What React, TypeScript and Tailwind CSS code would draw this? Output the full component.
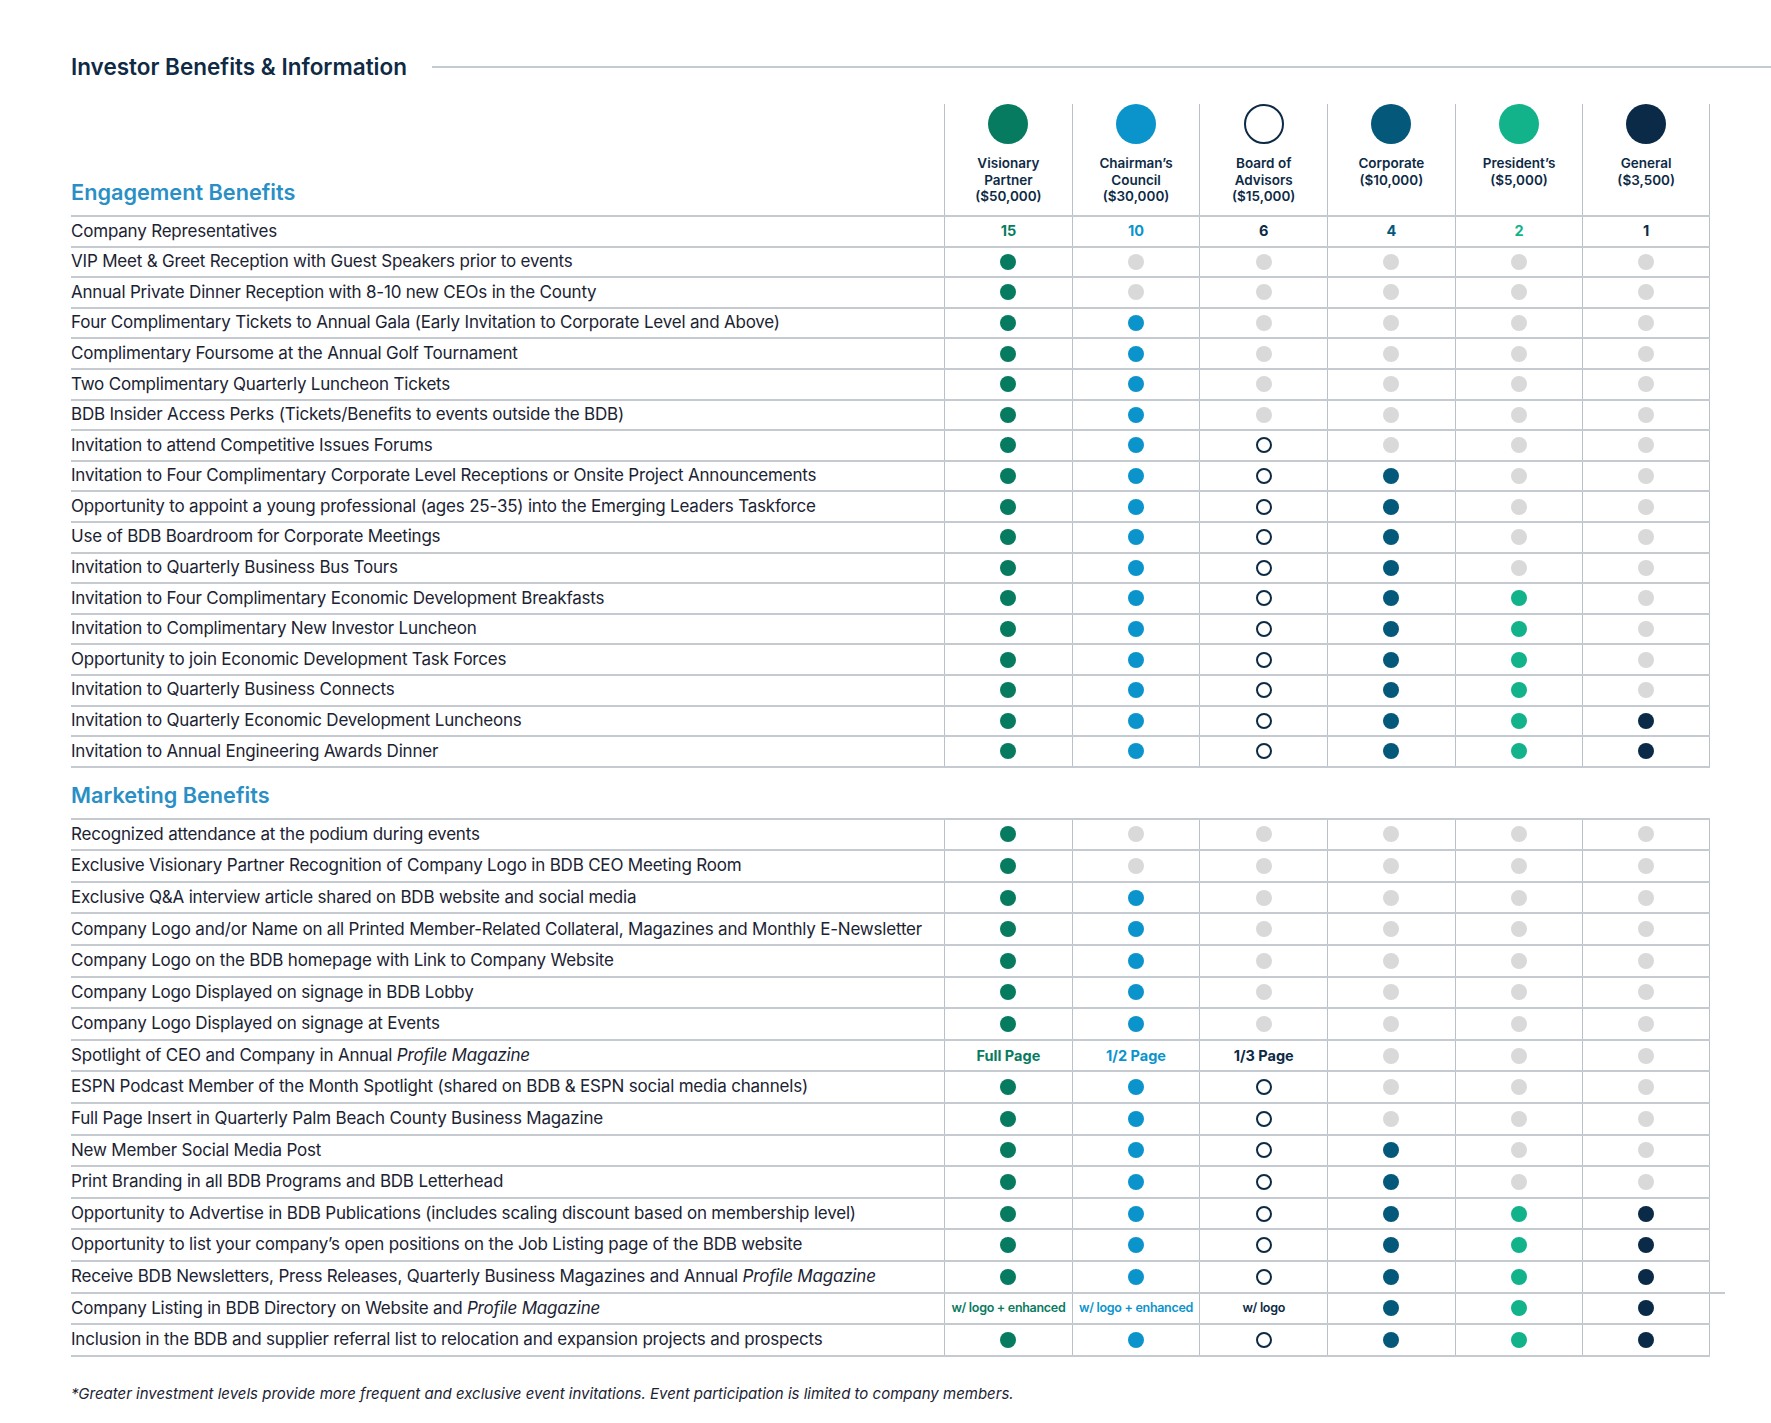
import React from "react";

type Cell = number | string;

const tiers = [
  { name: ["Visionary", "Partner", "($50,000)"], fill: "bg-[#077b60]", text: "text-[#077b60]" },
  { name: ["Chairman’s", "Council", "($30,000)"], fill: "bg-[#0b94cc]", text: "text-[#0b94cc]" },
  { name: ["Board of", "Advisors", "($15,000)"], fill: "open", text: "text-[#0d2a45]" },
  { name: ["Corporate", "($10,000)"], fill: "bg-[#04597b]", text: "text-[#04597b]" },
  { name: ["President’s", "($5,000)"], fill: "bg-[#12b38b]", text: "text-[#12b38b]" },
  { name: ["General", "($3,500)"], fill: "bg-[#0a2a47]", text: "text-[#0a2a47]" },
];

// level n = first n tiers get the benefit
const lv = (n: number): Cell[] => [0, 1, 2, 3, 4, 5].map((i) => (i < n ? 1 : 0));

type Row = { label: React.ReactNode; cells: Cell[]; extend?: boolean };

const engagement: Row[] = [
  { label: "Company Representatives", cells: ["15", "10", "6", "4", "2", "1"] },
  { label: "VIP Meet & Greet Reception with Guest Speakers prior to events", cells: lv(1) },
  { label: "Annual Private Dinner Reception with 8-10 new CEOs in the County", cells: lv(1) },
  { label: "Four Complimentary Tickets to Annual Gala (Early Invitation to Corporate Level and Above)", cells: lv(2) },
  { label: "Complimentary Foursome at the Annual Golf Tournament", cells: lv(2) },
  { label: "Two Complimentary Quarterly Luncheon Tickets", cells: lv(2) },
  { label: "BDB Insider Access Perks (Tickets/Benefits to events outside the BDB)", cells: lv(2) },
  { label: "Invitation to attend Competitive Issues Forums", cells: lv(3) },
  { label: "Invitation to Four Complimentary Corporate Level Receptions or Onsite Project Announcements", cells: lv(4) },
  { label: "Opportunity to appoint a young professional (ages 25-35) into the Emerging Leaders Taskforce", cells: lv(4) },
  { label: "Use of BDB Boardroom for Corporate Meetings", cells: lv(4) },
  { label: "Invitation to Quarterly Business Bus Tours", cells: lv(4) },
  { label: "Invitation to Four Complimentary Economic Development Breakfasts", cells: lv(5) },
  { label: "Invitation to Complimentary New Investor Luncheon", cells: lv(5) },
  { label: "Opportunity to join Economic Development Task Forces", cells: lv(5) },
  { label: "Invitation to Quarterly Business Connects", cells: lv(5) },
  { label: "Invitation to Quarterly Economic Development Luncheons", cells: lv(6) },
  { label: "Invitation to Annual Engineering Awards Dinner", cells: lv(6) },
];

const marketing: Row[] = [
  { label: "Recognized attendance at the podium during events", cells: lv(1) },
  { label: "Exclusive Visionary Partner Recognition of Company Logo in BDB CEO Meeting Room", cells: lv(1) },
  { label: "Exclusive Q&A interview article shared on BDB website and social media", cells: lv(2) },
  { label: "Company Logo and/or Name on all Printed Member-Related Collateral, Magazines and Monthly E-Newsletter", cells: lv(2) },
  { label: "Company Logo on the BDB homepage with Link to Company Website", cells: lv(2) },
  { label: "Company Logo Displayed on signage in BDB Lobby", cells: lv(2) },
  { label: "Company Logo Displayed on signage at Events", cells: lv(2) },
  {
    label: (
      <>
        Spotlight of CEO and Company in Annual <i>Profile Magazine</i>
      </>
    ),
    cells: ["Full Page", "1/2 Page", "1/3 Page", 0, 0, 0],
  },
  { label: "ESPN Podcast Member of the Month Spotlight (shared on BDB & ESPN social media channels)", cells: lv(3) },
  { label: "Full Page Insert in Quarterly Palm Beach County Business Magazine", cells: lv(3) },
  { label: "New Member Social Media Post", cells: lv(4) },
  { label: "Print Branding in all BDB Programs and BDB Letterhead", cells: lv(4) },
  { label: "Opportunity to Advertise in BDB Publications (includes scaling discount based on membership level)", cells: lv(6) },
  { label: "Opportunity to list your company’s open positions on the Job Listing page of the BDB website", cells: lv(6) },
  {
    label: (
      <>
        Receive BDB Newsletters, Press Releases, Quarterly Business Magazines and Annual <i>Profile Magazine</i>
      </>
    ),
    cells: lv(6),
    extend: true,
  },
  {
    label: (
      <>
        Company Listing in BDB Directory on Website and <i>Profile Magazine</i>
      </>
    ),
    cells: ["w/ logo + enhanced", "w/ logo + enhanced", "w/ logo", 1, 1, 1],
  },
  { label: "Inclusion in the BDB and supplier referral list to relocation and expansion projects and prospects", cells: lv(6) },
];

function Dot({ tier, on }: { tier: number; on: boolean }) {
  if (!on) return <span className="block h-4 w-4 rounded-full bg-[#d9d9d9]" />;
  const fill = tiers[tier].fill;
  if (fill === "open") return <span className="block h-4 w-4 rounded-full border-2 border-[#0d2a45] bg-white" />;
  return <span className={`block h-4 w-4 rounded-full ${fill}`} />;
}

function ValueCell({ value, tier }: { value: Cell; tier: number }) {
  let inner: React.ReactNode;
  if (typeof value === "number") {
    inner = <Dot tier={tier} on={value === 1} />;
  } else if (value.startsWith("w/")) {
    inner = <span className={`text-[12.5px] font-semibold tracking-[-0.3px] ${tiers[tier].text}`}>{value}</span>;
  } else {
    inner = <span className={`text-[14.5px] font-bold ${tiers[tier].text}`}>{value}</span>;
  }
  return (
    <div className={`flex items-center justify-center border-l border-[#b9c0c7] ${tier === 5 ? "border-r" : ""}`}>
      {inner}
    </div>
  );
}

function BenefitRows({ rows, rowH }: { rows: Row[]; rowH: string }) {
  return (
    <>
      {rows.map((row, i) => (
        <div
          key={i}
          className={`relative grid grid-cols-[1fr_repeat(6,127.67px)] border-b-2 border-[#c5cad0] ${rowH}`}
        >
          <div className="flex items-center text-[17px] tracking-[-0.2px] text-[#1b2333]">
            <span>{row.label}</span>
          </div>
          {row.cells.map((c, t) => (
            <ValueCell key={t} value={c} tier={t} />
          ))}
          {row.extend ? <span className="absolute -bottom-[2px] -right-[15px] h-[2px] w-[15px] bg-[#c5cad0]" /> : null}
        </div>
      ))}
    </>
  );
}

export default function App() {
  return (
    <div className="min-h-[1423px] w-[1771px] bg-white font-['Inter','Liberation_Sans',sans-serif]">
      <div className="flex items-center pl-[71px] pt-[53px]">
        <h1 className="text-[22.5px] font-semibold leading-[28px] text-[#0f2a44]">
          Investor Benefits &amp; Information
        </h1>
        <div className="ml-[25px] h-[2px] flex-1 bg-[#c3cad1]" />
      </div>

      <div className="ml-[71px] mt-[23px] w-[1639px]">
        {/* header */}
        <div className="grid h-[113px] grid-cols-[1fr_repeat(6,127.67px)] border-b-2 border-[#c5cad0]">
          <div className="flex items-end pb-[9px]">
            <h2 className="text-[21.7px] font-semibold leading-[28px] text-[#2a8fc5]">Engagement Benefits</h2>
          </div>
          {tiers.map((t, i) => (
            <div
              key={i}
              className={`flex flex-col items-center border-l border-[#b9c0c7] ${i === 5 ? "border-r" : ""}`}
            >
              {t.fill === "open" ? (
                <span className="block h-10 w-10 rounded-full border-2 border-[#0d2a45]" />
              ) : (
                <span className={`block h-10 w-10 rounded-full ${t.fill}`} />
              )}
              <div className="mt-[11px] text-center text-[13.5px] font-semibold leading-[16.5px] text-[#0d2a45]">
                {t.name.map((n) => (
                  <div key={n}>{n}</div>
                ))}
              </div>
            </div>
          ))}
        </div>

        <BenefitRows rows={engagement} rowH="h-[30.6px]" />

        <div className="pb-[9px] pt-[13px]">
          <h2 className="text-[21.7px] font-semibold leading-[28px] text-[#2a8fc5]">Marketing Benefits</h2>
        </div>

        <div className="border-t-2 border-[#c5cad0]">
          <BenefitRows rows={marketing} rowH="h-[31.6px]" />
        </div>

        <p className="mt-[27px] text-[15px] italic leading-[20px] text-[#1b2333]">
          *Greater investment levels provide more frequent and exclusive event invitations. Event participation is
          limited to company members.
        </p>
      </div>
    </div>
  );
}
